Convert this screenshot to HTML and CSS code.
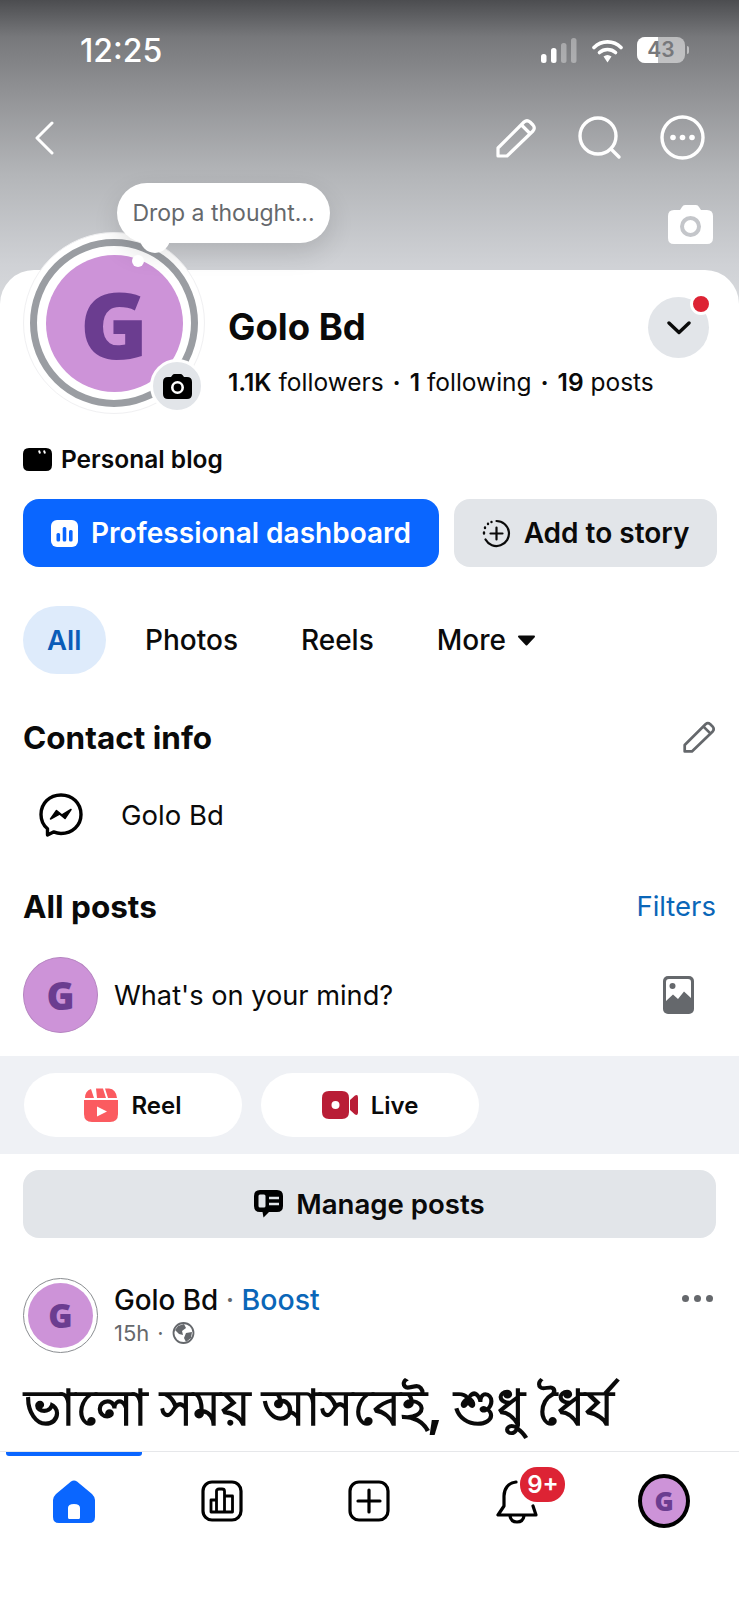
FILE: index.html
```html
<!DOCTYPE html>
<html lang="en">
<head>
  <meta charset="UTF-8">
  <title>Golo Bd</title>
  <link rel="stylesheet" href="styles.css">
</head>
<body>
  <div class="screen">
    <main class="scroll">
      <header class="cover">
        <div class="status-bar">
          <span class="clock">12:25</span>
          <div class="status-icons">
            <svg width="36" height="25" viewBox="0 0 36 25"><rect x="0" y="16" width="5.5" height="9" rx="2.5" fill="#fff"/><rect x="10" y="10" width="5.5" height="15" rx="2.5" fill="#fff"/><rect x="20" y="5" width="5.5" height="20" rx="2.5" fill="#fff" fill-opacity=".35"/><rect x="30" y="0" width="5.5" height="25" rx="2.5" fill="#fff" fill-opacity=".35"/></svg>
            <svg class="wifi" width="31" height="25" viewBox="0 0 31 25"><path d="M2 9.500C9.500 2 21.500 2 29 9.500" fill="none" stroke="#fff" stroke-width="3.600" stroke-linecap="round"/><path d="M7.500 14.500C12 10.500 19 10.500 23.500 14.500" fill="none" stroke="#fff" stroke-width="3.600" stroke-linecap="round"/><path d="M11.500 18.500Q15.500 15.500 19.500 18.500L15.500 24.500Z" fill="#fff"/></svg>
            <div class="battery"><span class="battery-level"></span><span class="battery-text">43</span></div>
          </div>
        </div>
        <div class="top-actions">
          <svg width="20" height="34" viewBox="0 0 20 34"><path d="M18 2L3 17L18 32" fill="none" stroke="#fff" stroke-width="3" stroke-linecap="round" stroke-linejoin="round"/></svg>
          <div class="top-actions-right">
            <svg class="top-pencil" width="41" height="40" viewBox="0 0 41 40"><path d="M2 38V30L28 4Q31 1.500 34 4L37 7Q39.500 10 37 13L11 38ZM25.500 7L34 15.500" fill="none" stroke="#fff" stroke-width="3.200" stroke-linejoin="round"/></svg>
            <svg width="44" height="44" viewBox="0 0 44 44"><circle cx="20" cy="20" r="18" fill="none" stroke="#fff" stroke-width="3.400"/><path d="M33 33L41 41" stroke="#fff" stroke-width="3.400" stroke-linecap="round"/></svg>
            <svg width="45" height="45" viewBox="0 0 45 45"><circle cx="22.500" cy="22.500" r="20.500" fill="none" stroke="#fff" stroke-width="3.400"/><circle cx="13" cy="22.500" r="2.800" fill="#fff"/><circle cx="22.500" cy="22.500" r="2.800" fill="#fff"/><circle cx="32" cy="22.500" r="2.800" fill="#fff"/></svg>
          </div>
        </div>
        <div class="cover-camera">
          <svg width="45" height="39" viewBox="0 0 45 39"><path d="M6 5H12L14 2Q15 0 17 0H28Q30 0 31 2L33 5H39Q45 5 45 11V33Q45 39 39 39H6Q0 39 0 33V11Q0 5 6 5Z" fill="#fff"/><circle cx="22.500" cy="21.500" r="8.500" fill="none" stroke="#c4c6ca" stroke-width="4"/></svg>
        </div>
      </header>

      <section class="card">
        <div class="thought">Drop a thought...</div>
        <div class="avatar-wrap">
          <div class="avatar-ring"><div class="avatar-big">G</div></div>
          <div class="avatar-camera">
            <svg width="29" height="25" viewBox="0 0 29 25"><path d="M5 3H8L9.500 1Q10.200 0 11.500 0H17.500Q18.800 0 19.500 1L21 3H24Q29 3 29 8V20Q29 25 24 25H5Q0 25 0 20V8Q0 3 5 3Z" fill="#000"/><circle cx="14.500" cy="13.500" r="5.200" fill="none" stroke="#fff" stroke-width="2.600"/></svg>
          </div>
        </div>

        <div class="profile-head">
          <div class="profile-text">
            <h1 class="profile-name">Golo Bd</h1>
            <p class="profile-stats"><b>1.1K</b> followers <i>·</i> <b>1</b> following <i>·</i> <b>19</b> posts</p>
          </div>
          <button class="round-btn">
            <svg width="24" height="14" viewBox="0 0 24 14"><path d="M2 2L12 11.500L22 2" fill="none" stroke="#0a0a0a" stroke-width="3.400" stroke-linecap="round" stroke-linejoin="round"/></svg>
            <span class="red-dot"></span>
          </button>
        </div>

        <div class="category">
          <svg width="29" height="23" viewBox="0 0 29 23"><path d="M6 0H23Q29 0 29 6V17Q29 23 23 23H6Q0 23 0 17V6Q0 0 6 0Z" fill="#000"/><path d="M16 2.500L17 5.500M21 2.500L22 5.500" stroke="#fff" stroke-width="2"/></svg>
          <span>Personal blog</span>
        </div>

        <div class="action-row">
          <a class="btn btn-blue">
            <svg width="27" height="27" viewBox="0 0 27 27"><rect width="27" height="27" rx="6" fill="#fff"/><rect x="5.500" y="13" width="3.600" height="8.500" rx="1.500" fill="#0a66ff"/><rect x="11.700" y="7" width="3.600" height="14.500" rx="1.500" fill="#0a66ff"/><rect x="18" y="10" width="3.600" height="11.500" rx="1.500" fill="#0a66ff"/></svg>
            Professional dashboard
          </a>
          <a class="btn btn-gray btn-story">
            <svg width="29" height="29" viewBox="0 0 29 29"><path d="M14.500 2A12.500 12.500 0 1 1 3.500 20.500" fill="none" stroke="#0a0a0a" stroke-width="2.200" stroke-linecap="round"/><path d="M2 14.500V13.500M3 9V8.500M6 5V4.800M9.500 3V2.900" stroke="#0a0a0a" stroke-width="2.400" stroke-linecap="round"/><path d="M14.500 8.500V20.500M8.500 14.500H20.500" stroke="#0a0a0a" stroke-width="2.200" stroke-linecap="round"/></svg>
            Add to story
          </a>
        </div>

        <nav class="tabs">
          <a class="tab tab-active">All</a>
          <a class="tab">Photos</a>
          <a class="tab">Reels</a>
          <a class="tab tab-more">More
            <svg width="19" height="11" viewBox="0 0 19 11"><path d="M2 1.500H17L9.500 9.500Z" fill="#0a0a0a" stroke="#0a0a0a" stroke-width="2" stroke-linejoin="round"/></svg>
          </a>
        </nav>

        <div class="section-head contact-head">
          <h2>Contact info</h2>
          <svg width="33" height="32" viewBox="0 0 41 40"><path d="M2 38V30L28 4Q31 1.500 34 4L37 7Q39.500 10 37 13L11 38ZM25.500 7L34 15.500" fill="none" stroke="#65686c" stroke-width="3.400" stroke-linejoin="round"/></svg>
        </div>

        <div class="contact-row">
          <svg width="44" height="44" viewBox="0 0 44 44"><path d="M22 2C10.500 2 2 10.300 2 21.500C2 27.500 4.300 32.300 8.500 35.800V42L14.500 38.900C16.800 39.800 19.300 40.500 22 40.500C33.500 40.500 42 32.200 42 21.500C42 10.300 33.500 2 22 2Z" fill="none" stroke="#000" stroke-width="3.400" stroke-linejoin="round"/><path d="M11.500 26L17.500 17.500L23 22L32 16.500L26 25.500L20.500 21Z" fill="#000" stroke="#000" stroke-width="1.500" stroke-linejoin="round"/></svg>
          <span>Golo Bd</span>
        </div>

        <div class="section-head posts-head">
          <h2>All posts</h2>
          <a class="link">Filters</a>
        </div>

        <div class="composer">
          <div class="avatar-small">G</div>
          <span class="composer-text">What's on your mind?</span>
          <svg width="31" height="38" viewBox="0 0 31 38"><rect width="31" height="38" rx="5" fill="#65686c"/><path d="M3 6Q3 3 6 3H25Q28 3 28 6V22L21 15.500L15 23L10 18.500L3 25Z" fill="#fff"/><circle cx="9.500" cy="10" r="3" fill="#65686c"/></svg>
        </div>

        <div class="quick-band">
          <a class="pill">
            <svg width="34" height="34" viewBox="0 0 34 34"><path d="M0 12H34V26Q34 34 26 34H8Q0 34 0 26Z" fill="#fb5b60"/><path d="M1 10Q1 3 7 1L10 10ZM12 0.500H19L22 10H13ZM21 0.500H25Q32 1 33 10H24Z" fill="#fb5b60"/><path d="M13 18.500L23 23.500L13 28.500Z" fill="#fff"/></svg>
            Reel
          </a>
          <a class="pill">
            <svg width="36" height="28" viewBox="0 0 36 28"><path d="M7 0H20Q27 0 27 7V21Q27 28 20 28H7Q0 28 0 21V7Q0 0 7 0Z" fill="#b91d36"/><path d="M28 9L33 4.500Q36 3 36 6.500V21.500Q36 25 33 23.500L28 19Z" fill="#b91d36"/><circle cx="13.500" cy="14" r="4" fill="#fff"/></svg>
            Live
          </a>
        </div>

        <a class="btn btn-gray btn-manage">
          <svg width="29" height="28" viewBox="0 0 29 28"><path d="M6 0H23Q29 0 29 6V16Q29 22 23 22H15L9.500 27.500L8.500 22H6Q0 22 0 16V6Q0 0 6 0Z" fill="#000"/><rect x="4.500" y="4.500" width="7" height="13" rx="1.500" fill="#e2e5e9"/><path d="M15 8H25M15 14H25" stroke="#e2e5e9" stroke-width="2.600"/></svg>
          Manage posts
        </a>

        <article class="post">
          <div class="post-head">
            <div class="avatar-post"><div class="avatar-post-inner">G</div></div>
            <div class="post-meta">
              <div class="post-author">Golo Bd <span class="sep">·</span> <a class="link">Boost</a></div>
              <div class="post-time">15h <span>·</span>
                <svg width="23" height="22" viewBox="0 0 23 22"><circle cx="11.500" cy="11" r="10" fill="#fff" stroke="#65686c" stroke-width="1.800"/><path d="M6 4L12 2L14 6L10 9L11 13L7 12L3 8ZM14 11L20 10L19 16L14 20L12 16Z" fill="#65686c"/></svg>
              </div>
            </div>
            <div class="post-dots"><span></span><span></span><span></span></div>
          </div>
          <p class="post-body">ভালো সময় আসবেই, শুধু ধৈর্য</p>
        </article>
      </section>
    </main>

    <footer class="tabbar">
      <a class="tabbar-item tabbar-active">
        <svg width="42" height="43" viewBox="0 0 42 43"><path fill-rule="evenodd" d="M18 1.500Q21 -0.500 24 1.500L39 14Q42 17 42 20V37Q42 43 36 43H6Q0 43 0 37V20Q0 17 3 14ZM15 37.500Q15 39 16.500 39H25.500Q27 39 27 37.500V28Q27 24 21 24Q15 24 15 28Z" fill="#0a66ff"/></svg>
      </a>
      <a class="tabbar-item">
        <svg width="42" height="42" viewBox="0 0 42 42"><rect x="2" y="2" width="38" height="38" rx="9" fill="none" stroke="#000" stroke-width="3.200"/><path d="M10 32V20H15.500V32ZM15.500 32V11Q15.500 9 18 9H21Q23.500 9 23.500 11V32ZM23.500 32V16H31.500V32ZM10 32H31.500" fill="none" stroke="#000" stroke-width="2.800" stroke-linejoin="round"/></svg>
      </a>
      <a class="tabbar-item">
        <svg width="42" height="42" viewBox="0 0 42 42"><rect x="2" y="2" width="38" height="38" rx="9" fill="none" stroke="#000" stroke-width="3.200"/><path d="M21 10V32M10 21H32" stroke="#000" stroke-width="3.200" stroke-linecap="round"/></svg>
      </a>
      <a class="tabbar-item">
        <svg class="bell" width="42" height="44" viewBox="0 0 42 44"><path d="M20 2C12 3 8 9 8 16V26L2 35H40L37 26M14 36Q15 42 21 42Q27 42 28 36" fill="none" stroke="#000" stroke-width="3.200" stroke-linecap="round" stroke-linejoin="round"/></svg>
        <span class="badge">9+</span>
      </a>
      <a class="tabbar-item">
        <div class="avatar-nav">G</div>
      </a>
    </footer>
  </div>
</body>
</html>
```
FILE: styles.css
```css
* {
  box-sizing: border-box;
}

body {
  margin: 0;
  width: 739px;
  height: 1600px;
  overflow: hidden;
  background: #fff;
  font-family: Inter, Roboto, sans-serif;
  color: #0a0a0a;
}

.screen {
  display: flex;
  flex-direction: column;
  height: 1600px;
}

.scroll {
  flex: 1;
  overflow: hidden;
}

/* cover */
.cover {
  position: relative;
  height: 310px;
  padding: 34px 34px 0;
  background: linear-gradient(180deg, #4c4d50 0%, #77787b 12%, #949598 32%, #b3b5b8 56%, #cfd1d5 85%, #d9dbde 100%);
}

.status-bar {
  display: flex;
  justify-content: space-between;
  align-items: center;
  height: 32px;
  padding: 0 20px 0 46px;
}

.clock {
  color: #fff;
  font-size: 32px;
  font-weight: 500;
}

.status-icons {
  display: flex;
  align-items: center;
}

.wifi {
  margin-left: 15px;
}

.battery {
  position: relative;
  width: 48px;
  height: 26px;
  margin-left: 14px;
  border-radius: 8px;
  background: rgba(255, 255, 255, 0.5);
}

.battery::after {
  content: "";
  position: absolute;
  left: 50px;
  top: 9px;
  width: 2px;
  height: 8px;
  border-radius: 0 2px 2px 0;
  background: rgba(255, 255, 255, 0.5);
}

.battery-level {
  position: absolute;
  left: 0;
  top: 0;
  bottom: 0;
  width: 43%;
  border-radius: 8px 0 0 8px;
  background: #fff;
}

.battery-text {
  position: absolute;
  inset: 0;
  text-align: center;
  font-size: 21px;
  line-height: 26px;
  font-weight: 600;
  color: #77787b;
}

.top-actions {
  display: flex;
  justify-content: space-between;
  align-items: center;
  margin-top: 49px;
  height: 45px;
}

.top-actions-right {
  display: flex;
  align-items: center;
  gap: 38px;
}

.top-pencil {
  margin-right: 3px;
}

.cover-camera {
  position: absolute;
  right: 26px;
  top: 205px;
}

/* card */
.card {
  position: relative;
  margin-top: -40px;
  background: #fff;
  border-radius: 34px 34px 0 0;
  padding-top: 27px;
}

.thought {
  position: absolute;
  left: 117px;
  top: -87px;
  z-index: 2;
  width: 213px;
  height: 60px;
  border-radius: 30px;
  background: #fff;
  box-shadow: 0 10px 26px rgba(0, 0, 0, 0.12);
  color: #65686c;
  font-size: 23px;
  line-height: 61px;
  text-align: center;
}

.thought::before {
  content: "";
  position: absolute;
  left: 23px;
  top: 40px;
  width: 30px;
  height: 30px;
  border-radius: 50%;
  background: #fff;
}

.thought::after {
  content: "";
  position: absolute;
  left: 15px;
  top: 72px;
  width: 12px;
  height: 12px;
  border-radius: 50%;
  background: #fff;
}

.avatar-wrap {
  position: absolute;
  left: 23px;
  top: -38px;
  width: 182px;
  height: 182px;
  border-radius: 50%;
  background: #fff;
  border: 1px solid #f0f0f2;
}

.avatar-ring {
  display: flex;
  align-items: center;
  justify-content: center;
  width: 168px;
  height: 168px;
  margin: 6px;
  border: 7px solid #9a9da2;
  border-radius: 50%;
}

.avatar-big {
  display: flex;
  align-items: center;
  justify-content: center;
  width: 137px;
  height: 137px;
  border-radius: 50%;
  background: #cd93d8;
  color: #6b3d90;
  font-family: "Open Sans", sans-serif;
  font-size: 92px;
  font-weight: 800;
}

.avatar-camera {
  position: absolute;
  left: 126px;
  top: 126px;
  display: flex;
  align-items: center;
  justify-content: center;
  width: 54px;
  height: 54px;
  border: 3px solid #fff;
  border-radius: 50%;
  background: #e2e5e9;
}

.profile-head {
  display: flex;
  align-items: flex-start;
  padding: 0 30px 0 228px;
}

.profile-text {
  flex: 1;
  min-width: 0;
}

.profile-name {
  margin: 7px 0 0;
  font-size: 36.5px;
  line-height: 46px;
  font-weight: 700;
}

.profile-stats {
  margin: 17px 0 0;
  font-size: 24.5px;
  line-height: 30px;
  white-space: nowrap;
}

.profile-stats b {
  font-weight: 600;
}

.profile-stats i {
  font-style: normal;
  font-weight: 700;
  margin: 0 2px;
}

.round-btn {
  position: relative;
  flex-shrink: 0;
  display: flex;
  align-items: center;
  justify-content: center;
  width: 61px;
  height: 61px;
  padding: 0;
  border: none;
  border-radius: 50%;
  background: #e2e5e9;
}

.red-dot {
  position: absolute;
  left: 42px;
  top: -4px;
  width: 22px;
  height: 22px;
  border: 3px solid #fff;
  border-radius: 50%;
  background: #dd2334;
}

.category {
  display: flex;
  align-items: center;
  gap: 9px;
  margin: 48px 0 0 23px;
  height: 28px;
  font-size: 24.5px;
  font-weight: 600;
}

.action-row {
  display: flex;
  gap: 15px;
  margin: 26px 22px 0 23px;
}

.btn {
  display: flex;
  align-items: center;
  justify-content: center;
  gap: 13px;
  height: 68px;
  border-radius: 16px;
  font-size: 28px;
  font-weight: 600;
}

.btn-blue {
  width: 416px;
  background: #0a66ff;
  color: #fff;
}

.btn-gray {
  background: #e2e5e9;
}

.btn-story {
  flex: 1;
}

.tabs {
  display: flex;
  align-items: center;
  margin: 39px 0 0 23px;
}

.tab {
  height: 68px;
  padding: 0 24px;
  margin-right: 15px;
  border-radius: 34px;
  font-size: 28px;
  font-weight: 500;
  line-height: 68px;
}

.tab-active {
  width: 83px;
  background: #deebfb;
  color: #0a5cb8;
  font-size: 27.5px;
  font-weight: 600;
}

.tab-more {
  display: flex;
  align-items: center;
  gap: 11px;
}

.section-head {
  display: flex;
  justify-content: space-between;
  align-items: center;
  padding: 0 23px;
}

.section-head h2 {
  margin: 0;
  font-size: 31.5px;
  font-weight: 700;
}

.contact-head {
  margin-top: 45px;
  height: 36px;
}

.contact-row {
  display: flex;
  align-items: center;
  gap: 38px;
  margin: 38px 0 0 39px;
  height: 44px;
  font-size: 27.5px;
}

.posts-head {
  margin-top: 51px;
  height: 36px;
}

.link {
  color: #0a66b8;
  font-size: 27.5px;
}

.composer {
  display: flex;
  align-items: center;
  margin: 33px 23px 0;
  padding-right: 22px;
  height: 76px;
  font-size: 27.2px;
}

.composer-text {
  flex: 1;
  margin-left: 16px;
}

.avatar-small {
  display: flex;
  align-items: center;
  justify-content: center;
  width: 75px;
  height: 76px;
  border: 1px solid #b584c0;
  border-radius: 50%;
  background: #cd93d8;
  color: #6b3d90;
  font-family: "Open Sans", sans-serif;
  font-size: 38px;
  font-weight: 800;
}

.quick-band {
  display: flex;
  gap: 19px;
  margin-top: 23px;
  padding: 17px 24px;
  height: 98px;
  background: #eff1f5;
}

.pill {
  display: flex;
  align-items: center;
  justify-content: center;
  gap: 13px;
  width: 218px;
  height: 64px;
  border-radius: 32px;
  background: #fff;
  font-size: 24px;
  font-weight: 600;
}

.btn-manage {
  margin: 16px 23px 0;
  font-size: 27.6px;
}

.post {
  margin-top: 40px;
  padding: 0 23px;
}

.post-head {
  display: flex;
  align-items: flex-start;
}

.avatar-post {
  width: 75px;
  height: 75px;
  padding: 4px;
  border: 1.5px solid #8a8d91;
  border-radius: 50%;
}

.avatar-post-inner {
  display: flex;
  align-items: center;
  justify-content: center;
  width: 100%;
  height: 100%;
  border-radius: 50%;
  background: #cd93d8;
  color: #6b3d90;
  font-family: "Open Sans", sans-serif;
  font-size: 33px;
  font-weight: 800;
}

.post-meta {
  flex: 1;
  margin-left: 16px;
}

.post-author {
  margin-top: 4px;
  font-size: 27.8px;
  line-height: 36px;
  font-weight: 500;
}

.post-author .sep {
  color: #65686c;
}

.post-author .link {
  font-size: 28.5px;
  font-weight: 500;
}

.post-time {
  display: flex;
  align-items: center;
  gap: 8px;
  font-size: 22px;
  line-height: 30px;
  color: #65686c;
}

.post-dots {
  display: flex;
  gap: 5px;
  margin: 17px 3px 0 0;
}

.post-dots span {
  width: 7px;
  height: 7px;
  border-radius: 50%;
  background: #65686c;
}

.post-body {
  margin: 21px 0 0 1px;
  font-size: 50px;
  line-height: 66px;
  font-weight: 700;
  white-space: nowrap;
}

/* bottom bar */
.tabbar {
  position: relative;
  display: grid;
  grid-template-columns: repeat(5, 1fr);
  height: 149px;
  padding-top: 28px;
  background: #fff;
  border-top: 1px solid #e6e7ea;
}

.tabbar-item {
  position: relative;
  display: flex;
  justify-content: center;
  align-items: flex-start;
}

.tabbar-active::before {
  content: "";
  position: absolute;
  left: 6px;
  right: 6px;
  top: -28px;
  height: 4px;
  border-radius: 0 0 3px 3px;
  background: #0a66ff;
}

.badge {
  position: absolute;
  left: 77px;
  top: -13px;
  width: 45px;
  height: 35px;
  border-radius: 17px;
  background: #dd2334;
  color: #fff;
  font-size: 24px;
  font-weight: 600;
  line-height: 35px;
  text-align: center;
}

.avatar-nav {
  display: flex;
  align-items: center;
  justify-content: center;
  width: 52px;
  height: 54px;
  margin: -6px 2px 0 0;
  border: 4px solid #000;
  border-radius: 50%;
  background: #cd93d8;
  color: #6b3d90;
  font-family: "Open Sans", sans-serif;
  font-size: 26px;
  font-weight: 800;
}
```
